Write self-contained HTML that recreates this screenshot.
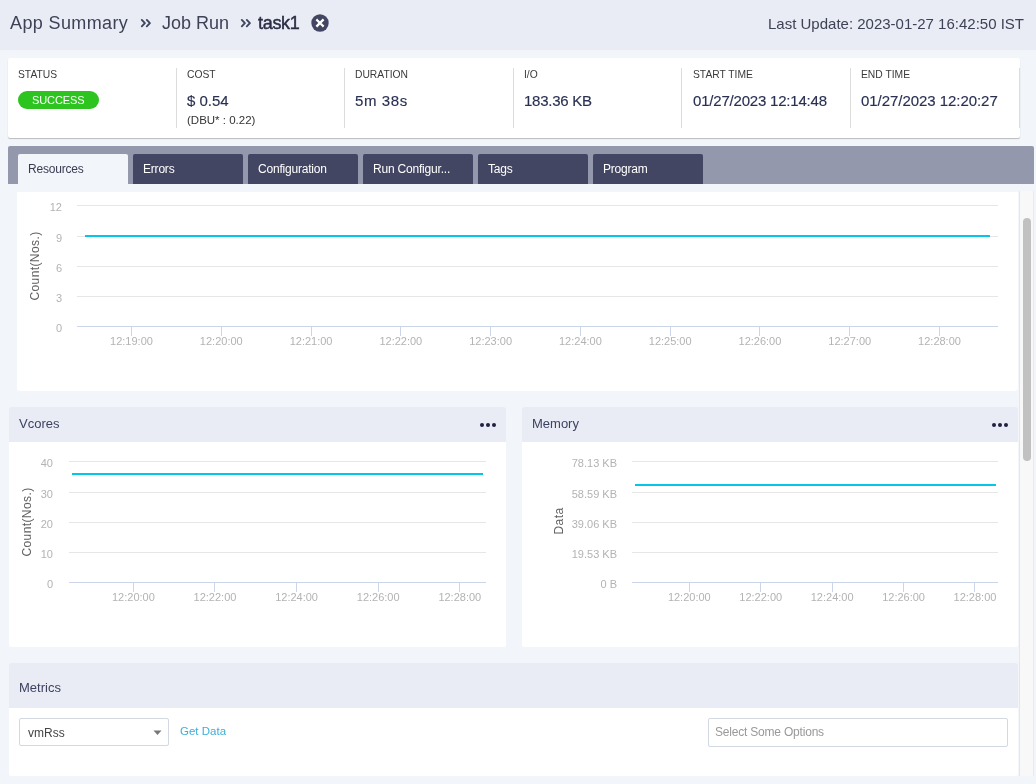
<!DOCTYPE html>
<html><head><meta charset="utf-8">
<style>
*{box-sizing:border-box;margin:0;padding:0}
html,body{width:1036px;height:784px;overflow:hidden;will-change:transform;background:#F2F5F9;font-family:"Liberation Sans",sans-serif;position:relative}
.abs{position:absolute;white-space:nowrap}
#hdr{position:absolute;left:0;top:0;width:1036px;height:50px;background:#E9ECF4}
.bc{position:absolute;top:12px;font-size:18px;line-height:22px;color:#3E4257}
.card{position:absolute;left:8px;top:58px;width:1012px;height:80px;background:#fff;border-radius:2px;box-shadow:0 1px 1px rgba(0,0,0,0.24)}
.col{position:absolute;top:10px;height:60px;border-right:1px solid #DCDCDC}
.lbl{position:absolute;font-size:10.3px;color:#3A3A3A;line-height:12px}
.val{position:absolute;font-size:15px;color:#2A3052;line-height:18px;-webkit-text-stroke:0.15px #2A3052}
#tabs{position:absolute;left:8px;top:146px;width:1026px;height:38px;background:#9398AD;border-radius:2px 2px 0 0}
.tab{position:absolute;top:8px;width:110px;height:30px;background:#434662;border-radius:2px 2px 0 0;color:#fff;font-size:12px;line-height:30px;padding-left:10px;letter-spacing:-0.2px}
.tab.act{background:#F2F5F9;color:#3A3D52}
.panel{position:absolute;background:#fff;border-radius:2px}
.ph{position:absolute;left:0;top:0;width:100%;height:35px;background:#E9ECF4;border-radius:2px 2px 0 0;font-size:13px;color:#3C4260;line-height:33px;padding-left:10px}
.dots{position:absolute;top:16px}
.dots i{position:absolute;top:0;width:4px;height:4px;border-radius:50%;background:#20233E}
#sb{position:absolute;left:1019px;top:191px;width:15px;height:585px;background:#F8F8F8;border-left:1px solid #E6E6E6;border-right:1px solid #EAEAEA}
#thumb{position:absolute;left:3px;top:27px;width:8px;height:243px;background:#C1C1C1;border-radius:4px}
svg text{font-family:"Liberation Sans",sans-serif}
</style></head><body>
<div id="hdr">
  <div class="bc" style="left:10px;letter-spacing:0.38px">App Summary</div>
  <svg class="abs" style="left:138px;top:16px" width="16" height="14" viewBox="0 0 16 14"><path d="M3.8 3.9L6.9 7.1L3.8 10.3M8.8 3.9L11.9 7.1L8.8 10.3" fill="none" stroke="#3F465F" stroke-width="1.9" stroke-linecap="round" stroke-linejoin="round"/></svg>
  <div class="bc" style="left:162px">Job Run</div>
  <svg class="abs" style="left:238px;top:16px" width="16" height="14" viewBox="0 0 16 14"><path d="M3.8 3.9L6.9 7.1L3.8 10.3M8.8 3.9L11.9 7.1L8.8 10.3" fill="none" stroke="#3F465F" stroke-width="1.9" stroke-linecap="round" stroke-linejoin="round"/></svg>
  <div class="bc" style="left:258px;color:#2B2E45;letter-spacing:-0.3px;-webkit-text-stroke:0.45px #2B2E45">task1</div>
  <svg class="abs" style="left:311px;top:14px" width="18" height="18" viewBox="0 0 18 18"><circle cx="9" cy="9" r="8.7" fill="#434662"/><path d="M6.2 6.2L11.8 11.8M11.8 6.2L6.2 11.8" stroke="#fff" stroke-width="2.3" stroke-linecap="square"/></svg>
  <div class="abs" style="left:768px;top:15px;font-size:15px;line-height:18px;color:#3E4257">Last Update: 2023-01-27 16:42:50 IST</div>
</div>

<div class="card">
  <div class="col" style="left:0;width:169px"></div>
  <div class="col" style="left:169px;width:168px"></div>
  <div class="col" style="left:337px;width:169px"></div>
  <div class="col" style="left:506px;width:168px"></div>
  <div class="col" style="left:674px;width:169px"></div>
  <div class="col" style="left:843px;width:169px"></div>
  <div class="lbl" style="left:10px;top:11px">STATUS</div>
  <div class="abs" style="left:10px;top:33px;width:81px;height:18px;border-radius:9px;background:#2EC41F;color:#fff;font-size:11px;line-height:18px;text-align:center;letter-spacing:-0.1px;text-indent:-0.5px">SUCCESS</div>
  <div class="lbl" style="left:179px;top:11px">COST</div>
  <div class="val" style="left:179px;top:34px">$ 0.54</div>
  <div class="abs" style="left:179px;top:56px;font-size:11.5px;line-height:13px;color:#333">(DBU* : 0.22)</div>
  <div class="lbl" style="left:347px;top:11px">DURATION</div>
  <div class="val" style="left:347px;top:34px;letter-spacing:0.6px">5m 38s</div>
  <div class="lbl" style="left:516px;top:11px">I/O</div>
  <div class="val" style="left:516px;top:34px;letter-spacing:-0.25px">183.36 KB</div>
  <div class="lbl" style="left:685px;top:11px">START TIME</div>
  <div class="val" style="left:685px;top:34px;letter-spacing:-0.2px">01/27/2023 12:14:48</div>
  <div class="lbl" style="left:853px;top:11px">END TIME</div>
  <div class="val" style="left:853px;top:34px;letter-spacing:-0.05px">01/27/2023 12:20:27</div>
</div>

<div id="tabs">
  <div class="tab act" style="left:10px">Resources</div>
  <div class="tab" style="left:125px">Errors</div>
  <div class="tab" style="left:240px">Configuration</div>
  <div class="tab" style="left:355px">Run Configur...</div>
  <div class="tab" style="left:470px">Tags</div>
  <div class="tab" style="left:585px">Program</div>
</div>

<!-- panel 1 -->
<div class="panel" style="left:17px;top:192px;width:1001px;height:199px;border-radius:0 0 3px 3px"></div>

<!-- vcores -->
<div class="panel" style="left:9px;top:407px;width:497px;height:240px">
  <div class="ph">Vcores<div class="dots" style="left:471px"><i style="left:0"></i><i style="left:6px"></i><i style="left:12px"></i></div></div>
</div>
<!-- memory -->
<div class="panel" style="left:522px;top:407px;width:496px;height:240px">
  <div class="ph">Memory<div class="dots" style="left:470px"><i style="left:0"></i><i style="left:6px"></i><i style="left:12px"></i></div></div>
</div>
<!-- metrics -->
<div class="panel" style="left:9px;top:663px;width:1009px;height:113px">
  <div class="ph" style="height:45px;line-height:49px">Metrics</div>
</div>

<!-- metrics content -->
<div class="abs" style="left:19px;top:718px;width:150px;height:28px;border:1px solid #D3D9E3;border-radius:2px;background:#fff;font-size:12px;line-height:28px;color:#444;padding-left:8px">vmRss</div>
<svg class="abs" style="left:153px;top:730px" width="10" height="6" viewBox="0 0 10 6"><path d="M0.5 0.5H8.5L4.5 5z" fill="#777"/></svg>
<div class="abs" style="left:180px;top:724px;font-size:11.5px;line-height:15px;color:#3BAEDA">Get Data</div>
<div class="abs" style="left:708px;top:718px;width:300px;height:29px;border:1px solid #D3D9E3;border-radius:2px;background:#fff;font-size:12px;line-height:27px;color:#999;padding-left:6px;letter-spacing:-0.2px">Select Some Options</div>
<svg class="abs" style="left:0;top:0" width="1036" height="784" viewBox="0 0 1036 784">
<path d="M77 205.5H998" stroke="#E6E6E6" stroke-width="1"/>
<path d="M77 236.5H998" stroke="#E6E6E6" stroke-width="1"/>
<path d="M77 266.5H998" stroke="#E6E6E6" stroke-width="1"/>
<path d="M77 296.5H998" stroke="#E6E6E6" stroke-width="1"/>
<path d="M77 326.5H998" stroke="#CCD6EB" stroke-width="1"/>
<path d="M131.5 326V336" stroke="#CCD6EB" stroke-width="1"/>
<path d="M221.5 326V336" stroke="#CCD6EB" stroke-width="1"/>
<path d="M311.5 326V336" stroke="#CCD6EB" stroke-width="1"/>
<path d="M400.5 326V336" stroke="#CCD6EB" stroke-width="1"/>
<path d="M490.5 326V336" stroke="#CCD6EB" stroke-width="1"/>
<path d="M580.5 326V336" stroke="#CCD6EB" stroke-width="1"/>
<path d="M670.5 326V336" stroke="#CCD6EB" stroke-width="1"/>
<path d="M759.5 326V336" stroke="#CCD6EB" stroke-width="1"/>
<path d="M849.5 326V336" stroke="#CCD6EB" stroke-width="1"/>
<path d="M939.5 326V336" stroke="#CCD6EB" stroke-width="1"/>
<text x="62" y="211" text-anchor="end" fill="#B3B3B3" font-size="11">12</text>
<text x="62" y="242" text-anchor="end" fill="#B3B3B3" font-size="11">9</text>
<text x="62" y="272" text-anchor="end" fill="#B3B3B3" font-size="11">6</text>
<text x="62" y="302" text-anchor="end" fill="#B3B3B3" font-size="11">3</text>
<text x="62" y="332" text-anchor="end" fill="#B3B3B3" font-size="11">0</text>
<text x="131.5" y="345" text-anchor="middle" fill="#B3B3B3" font-size="11">12:19:00</text>
<text x="221.28" y="345" text-anchor="middle" fill="#B3B3B3" font-size="11">12:20:00</text>
<text x="311.06" y="345" text-anchor="middle" fill="#B3B3B3" font-size="11">12:21:00</text>
<text x="400.84000000000003" y="345" text-anchor="middle" fill="#B3B3B3" font-size="11">12:22:00</text>
<text x="490.62" y="345" text-anchor="middle" fill="#B3B3B3" font-size="11">12:23:00</text>
<text x="580.4" y="345" text-anchor="middle" fill="#B3B3B3" font-size="11">12:24:00</text>
<text x="670.1800000000001" y="345" text-anchor="middle" fill="#B3B3B3" font-size="11">12:25:00</text>
<text x="759.96" y="345" text-anchor="middle" fill="#B3B3B3" font-size="11">12:26:00</text>
<text x="849.74" y="345" text-anchor="middle" fill="#B3B3B3" font-size="11">12:27:00</text>
<text x="939.52" y="345" text-anchor="middle" fill="#B3B3B3" font-size="11">12:28:00</text>
<path d="M85 236H990" stroke="#04C6E8" stroke-width="2"/>
<text x="0" y="0" transform="translate(39 266) rotate(-90)" text-anchor="middle" fill="#616161" font-size="12" letter-spacing="0.4">Count(Nos.)</text>
<path d="M69 461.5H486" stroke="#E6E6E6" stroke-width="1"/>
<path d="M69 492.5H486" stroke="#E6E6E6" stroke-width="1"/>
<path d="M69 522.5H486" stroke="#E6E6E6" stroke-width="1"/>
<path d="M69 552.5H486" stroke="#E6E6E6" stroke-width="1"/>
<path d="M69 582.5H486" stroke="#CCD6EB" stroke-width="1"/>
<path d="M133.5 582V592" stroke="#CCD6EB" stroke-width="1"/>
<path d="M214.5 582V592" stroke="#CCD6EB" stroke-width="1"/>
<path d="M296.5 582V592" stroke="#CCD6EB" stroke-width="1"/>
<path d="M378.5 582V592" stroke="#CCD6EB" stroke-width="1"/>
<path d="M459.5 582V592" stroke="#CCD6EB" stroke-width="1"/>
<text x="53" y="467" text-anchor="end" fill="#B3B3B3" font-size="11">40</text>
<text x="53" y="498" text-anchor="end" fill="#B3B3B3" font-size="11">30</text>
<text x="53" y="528" text-anchor="end" fill="#B3B3B3" font-size="11">20</text>
<text x="53" y="558" text-anchor="end" fill="#B3B3B3" font-size="11">10</text>
<text x="53" y="588" text-anchor="end" fill="#B3B3B3" font-size="11">0</text>
<text x="133.4" y="601" text-anchor="middle" fill="#B3B3B3" font-size="11">12:20:00</text>
<text x="215.0" y="601" text-anchor="middle" fill="#B3B3B3" font-size="11">12:22:00</text>
<text x="296.6" y="601" text-anchor="middle" fill="#B3B3B3" font-size="11">12:24:00</text>
<text x="378.2" y="601" text-anchor="middle" fill="#B3B3B3" font-size="11">12:26:00</text>
<text x="459.79999999999995" y="601" text-anchor="middle" fill="#B3B3B3" font-size="11">12:28:00</text>
<path d="M72 474H483" stroke="#04C6E8" stroke-width="2"/>
<text x="0" y="0" transform="translate(31 522) rotate(-90)" text-anchor="middle" fill="#616161" font-size="12" letter-spacing="0.4">Count(Nos.)</text>
<path d="M632 461.5H998" stroke="#E6E6E6" stroke-width="1"/>
<path d="M632 492.5H998" stroke="#E6E6E6" stroke-width="1"/>
<path d="M632 522.5H998" stroke="#E6E6E6" stroke-width="1"/>
<path d="M632 552.5H998" stroke="#E6E6E6" stroke-width="1"/>
<path d="M632 582.5H998" stroke="#CCD6EB" stroke-width="1"/>
<path d="M689.5 582V592" stroke="#CCD6EB" stroke-width="1"/>
<path d="M760.5 582V592" stroke="#CCD6EB" stroke-width="1"/>
<path d="M832.5 582V592" stroke="#CCD6EB" stroke-width="1"/>
<path d="M903.5 582V592" stroke="#CCD6EB" stroke-width="1"/>
<path d="M974.5 582V592" stroke="#CCD6EB" stroke-width="1"/>
<text x="617" y="467" text-anchor="end" fill="#B3B3B3" font-size="11">78.13 KB</text>
<text x="617" y="498" text-anchor="end" fill="#B3B3B3" font-size="11">58.59 KB</text>
<text x="617" y="528" text-anchor="end" fill="#B3B3B3" font-size="11">39.06 KB</text>
<text x="617" y="558" text-anchor="end" fill="#B3B3B3" font-size="11">19.53 KB</text>
<text x="617" y="588" text-anchor="end" fill="#B3B3B3" font-size="11">0 B</text>
<text x="689.3" y="601" text-anchor="middle" fill="#B3B3B3" font-size="11">12:20:00</text>
<text x="760.7199999999999" y="601" text-anchor="middle" fill="#B3B3B3" font-size="11">12:22:00</text>
<text x="832.14" y="601" text-anchor="middle" fill="#B3B3B3" font-size="11">12:24:00</text>
<text x="903.56" y="601" text-anchor="middle" fill="#B3B3B3" font-size="11">12:26:00</text>
<text x="974.98" y="601" text-anchor="middle" fill="#B3B3B3" font-size="11">12:28:00</text>
<path d="M635 485H996" stroke="#04C6E8" stroke-width="2"/>
<text x="0" y="0" transform="translate(563 521) rotate(-90)" text-anchor="middle" fill="#616161" font-size="12" letter-spacing="0.4">Data</text>
</svg>
<div id="sb"><div id="thumb"></div></div>
</body></html>
